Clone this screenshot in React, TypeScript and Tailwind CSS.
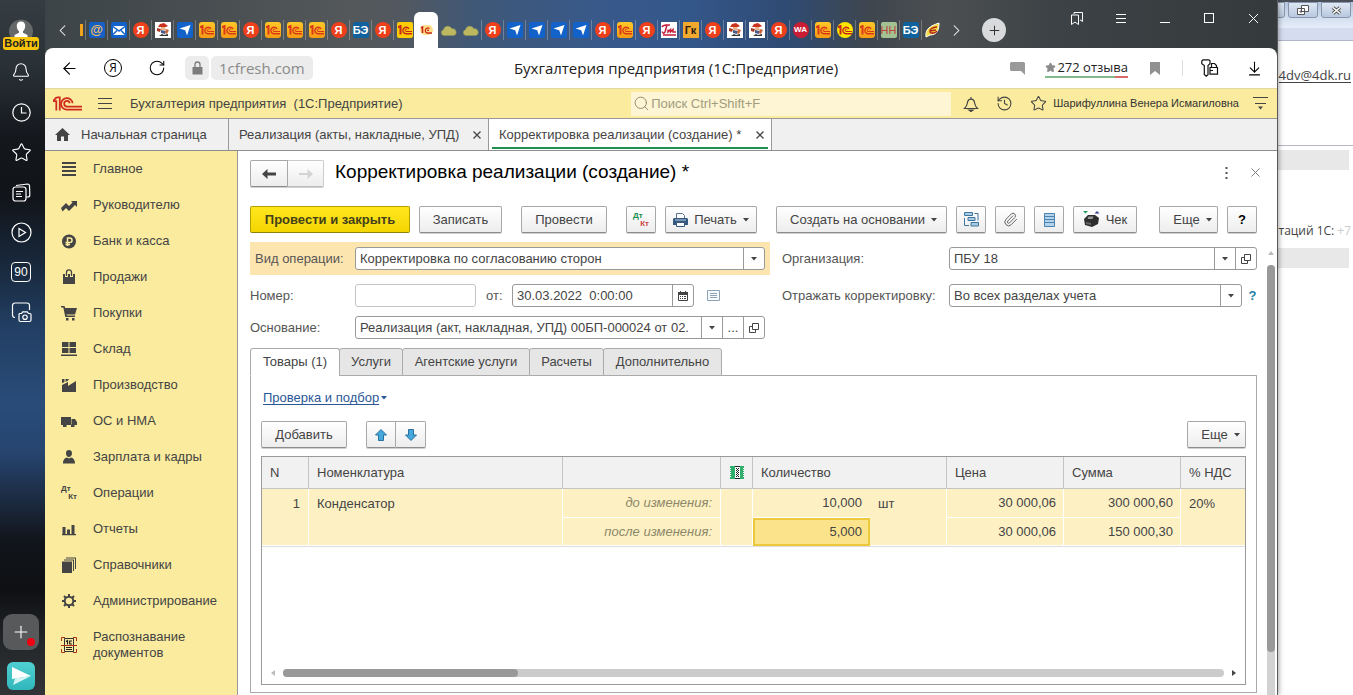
import React from 'react';
import {
  Bell, Star, Search, X, Plus, Paperclip,
  ChevronLeft, ChevronRight, ArrowLeft, RotateCw, ArrowDownToLine, History,
} from 'lucide-react';

const BTN = 'flex h-[27px] shrink-0 items-center justify-center whitespace-nowrap rounded-[2px] border border-[#a8a8a8] border-b-[#8c8c8c] bg-linear-to-b from-white to-[#ededed] text-[13px] text-[#444] shadow-[0_1px_0_#d0d0d0]';
const FIELD = 'flex h-[23px] min-w-0 items-stretch overflow-hidden rounded-[3px] border border-[#999] bg-white text-[13px] text-[#444]';
const CELL_BTN = 'flex w-[21px] shrink-0 items-center justify-center border-l border-[#999] text-[#444]';

/* ---------- мелкие значки ---------- */

const Caret = () => (
  <svg width="6" height="4" viewBox="0 0 6 4" className="shrink-0"><path d="M0 0h6L3 3.5z" fill="currentColor" /></svg>
);

const OpenIcon = () => (
  <svg width="10" height="10" viewBox="0 0 10 10" fill="none" stroke="#444">
    <path d="M3.5.5h6v6h-6zM3.5 3.5h-3v6h6v-3" />
  </svg>
);

// логотип 1С: единица и двойная дуга с хвостом
const Logo1C = ({ className = '', color = '#d02a1e' }: { className?: string; color?: string }) => (
  <svg viewBox="0 0 30 16" className={className} fill="none" stroke={color} strokeWidth="1.8">
    <path d="M0 5.200h3.400V15M2.200 2.300L4.500 1.400H7V15M0 5.200l3.500-3.400" />
    <path d="M20.300 7.500A6 6 0 1 0 14.500 14.200H30" />
    <path d="M17.300 7.500A2.900 2.900 0 1 0 14.500 10.900H30" />
  </svg>
);

// упрощённый вариант для 16-пиксельных вкладок
const Mini1C = ({ color = '#d9381a' }: { color?: string }) => (
  <svg width="14" height="10" viewBox="0 0 14 10" fill="none" stroke={color} strokeWidth="1.400">
    <path d="M0 2.500L2.500 1v8.500" strokeWidth="2" />
    <path d="M11 3.800A3.300 3.300 0 1 0 8 8.800h6" />
    <path d="M9.300 4.600A1.200 1.200 0 1 0 8 6.500h6" strokeWidth="1" />
  </svg>
);

const DtKt = ({ top, bottom }: { top: string; bottom: string }) => (
  <span className="flex w-4 flex-col text-[8px] leading-[8px] font-bold">
    <span className={`text-left ${top}`}>Дт</span>
    <span className={`text-right ${bottom}`}>Кт</span>
  </span>
);

/* ---------- вкладки браузера ---------- */

const Favicon = ({ kind }: { kind: string }) => {
  switch (kind) {
    case 'ya':
      return <span className="flex size-4 items-center justify-center rounded-full bg-[#ee3f1b] text-[11px] leading-4 font-bold text-white">Я</span>;
    case 'tg':
      return (
        <svg width="16" height="16" viewBox="0 0 16 16"><rect width="16" height="16" rx="2" fill="#1262c9" /><path d="M2.500 6.500L13.500 3 10 13.500 8.200 8.200z" fill="#fff" /></svg>
      );
    case '1c':
      return <span className="flex size-4 items-center justify-center rounded-[3px] bg-linear-to-b from-[#ffc928] to-[#f59a12]"><Mini1C /></span>;
    case '1cy':
      return <span className="flex size-4 items-center justify-center rounded-[2px] bg-[#ffcd05]"><Mini1C color="#c8281a" /></span>;
    case '1cr':
      return <span className="flex size-4 items-center justify-center rounded-full bg-[#ffe600]"><Mini1C color="#c8281a" /></span>;
    case 'at':
      return <span className="flex size-4 items-center justify-center rounded-[2px] bg-[#1660c4] text-[13px] leading-4 font-bold text-[#f0bd62]">@</span>;
    case 'mail':
      return (
        <svg width="16" height="16" viewBox="0 0 16 16"><rect width="16" height="16" rx="2" fill="#1262c9" /><rect x="2" y="4" width="12" height="9" fill="#fff" /><path d="M2 4.500l6 4.500 6-4.500M2 12.500l4-4M14 12.500l-4-4" stroke="#1262c9" fill="none" strokeWidth="1.500" /></svg>
      );
    case 'clerk':
      return (
        <svg width="16" height="16" viewBox="0 0 16 16"><path fill="#fff" d="M0 0h16v16H0z" /><path d="M3 5l2-3 4-1 4 3-2 1H6z" fill="#c8321e" /><path d="M6 5h4l1 3H6z" fill="#eab58b" /><path d="M2 6l4 1-1 3-3-1z" fill="#a63a22" /><path d="M6 8l5 1-1 3-4-1z" fill="#4a5c8c" /><path d="M11 7l3 1-2 4-2-1z" fill="#c9653a" /><path d="M4 14l3-2 2 1 4-1v2z" fill="#333" /></svg>
      );
    case 'cloud':
      return (
        <svg width="17" height="11" viewBox="0 0 17 11"><path d="M3.500 10.500a3 3 0 0 1 0-5.800A4.500 4.500 0 0 1 12 3.800a3.400 3.400 0 0 1 1.500 6.700z" fill="#bdb760" stroke="#8b9a58" strokeWidth=".5" /></svg>
      );
    case 'be':
      return <span className="flex size-4 items-center justify-center rounded-[2px] bg-[#10629e] text-[11px] leading-4 font-bold text-white">БЭ</span>;
    case 'hh':
      return <span className="flex size-4 items-center justify-center rounded-[2px] bg-[#a3c293] text-[11px] leading-4 text-[#bd4438]">НН</span>;
    case 'wa':
      return <span className="flex size-4 items-center justify-center rounded-full bg-[#c81d33] text-[8px] leading-4 font-bold text-white">WA</span>;
    case 'gk':
      return <span className="flex size-4 items-center justify-center bg-[#f3a92e] text-[11px] leading-4 font-bold text-[#2a1c14]">Гк</span>;
    case 'trade':
      return (
        <svg width="16" height="16" viewBox="0 0 16 16"><path fill="#fff" d="M0 0h16v16H0z" /><path d="M1 5c1-3 4-2 8-2M6 3L4 10c-1 2-3 1-2.500-.5M7 7.500v2.500l2.500-2.500v2.500L12 7.500v2.500h3M2 13h13" stroke="#c61e38" strokeWidth="1.500" fill="none" /></svg>
      );
    case 'leaf':
      return (
        <svg width="16" height="16" viewBox="0 0 16 16"><path d="M1 15C0 7 5 4 14 1c0 7-2 12-9 12z" fill="#f4dc3c" stroke="#fff" /><path d="M12 5C7 5 4 8 5 10s6 1 7-1M5 9l6-1" stroke="#b3291e" strokeWidth="1.600" fill="none" /></svg>
      );
    default:
      return null;
  }
};

const tabsBefore = ['at', 'mail', 'ya', 'clerk', 'tg', '1c', '1c', 'ya', '1c', '1c', '1c', 'ya', 'be', 'ya', '1cy'];
const tabsAfter = ['cloud', 'cloud', 'ya', 'tg', 'tg', 'tg', 'tg', 'ya', '1c', 'ya', 'trade', 'gk', 'ya', 'clerk', 'clerk', 'ya', 'wa', '1c', '1cr', '1c', 'hh', 'be', 'leaf'];

const BrowserTab = ({ kind, line = true }: { kind: string; line?: boolean }) => (
  <button className={`flex h-5 w-[22px] shrink-0 items-center justify-center border-l ${line ? 'border-white/25' : 'border-transparent'}`}>
    <Favicon kind={kind} />
  </button>
);

const TabStrip = () => (
  <div className="flex h-12 shrink-0">
    <div className="flex min-w-0 items-center pt-3">
      <button className="flex w-[35px] shrink-0 items-center justify-center text-white"><ChevronLeft size={19} strokeWidth={1.3} /></button>
      <span className="mr-[2px] h-3 w-[3px] shrink-0 bg-[#f3a21c]" />
      {tabsBefore.map((k, i) => <BrowserTab key={i} kind={k} />)}
      <span className="-mt-3 flex h-12 shrink-0 self-stretch pt-3">
        <span className="flex h-9 w-[22px] items-center justify-center rounded-t-[6px] bg-white shadow-[-1px_0_0_#fff,1px_0_0_#fff]">
          <span className="flex h-[10px] w-[13px] items-center justify-center rounded-full bg-[#ffdf8a]">
            <svg width="12" height="8" viewBox="0 0 12 8" fill="none" stroke="#c8281a"><path d="M1 2l1.500-1v6" strokeWidth="1.600" /><path d="M9.500 2.500A2.600 2.600 0 1 0 7 7h5M7 4.300h2" strokeWidth="1.300" /></svg>
          </span>
        </span>
      </span>
      {tabsAfter.map((k, i) => <BrowserTab key={i} kind={k} line={i > 1} />)}
      <button className="flex w-[27px] shrink-0 items-center justify-center text-white"><ChevronRight size={19} strokeWidth={1.3} /></button>
      <button className="ml-3 flex size-6 shrink-0 items-center justify-center rounded-full bg-[#d9dadb] text-[#333]"><Plus size={15} strokeWidth={1.6} /></button>
    </div>
    <div className="ml-auto flex h-9 shrink-0 items-center pr-[2px] text-white">
      <button className="flex w-11 justify-center" aria-label="Закладки">
        <svg width="14" height="15" viewBox="0 0 14 15" fill="none" stroke="currentColor"><path d="M4 3V1.500h8.500v9L10 8.800M1.500 4h7v9.500L5 11l-3.500 2.500z" /></svg>
      </button>
      <button className="flex w-11 justify-center" aria-label="Меню">
        <svg width="10" height="9" viewBox="0 0 10 9" stroke="currentColor"><path d="M0 .5h10M0 4.500h10M0 8.500h10" /></svg>
      </button>
      <button className="flex w-11 justify-center pt-2" aria-label="Свернуть"><span className="h-px w-[10px] bg-white" /></button>
      <button className="flex w-11 justify-center" aria-label="Развернуть"><span className="size-[10px] border border-white" /></button>
      <button className="flex w-11 justify-center" aria-label="Закрыть"><X size={17} strokeWidth={1.4} /></button>
    </div>
  </div>
);

const AddressBar = () => (
  <div className="flex h-10 shrink-0 items-center rounded-t-[8px] bg-white pr-[2px] font-['Open_Sans','Noto_Sans',sans-serif] text-black">
    <div className="flex flex-1 items-center">
      <button className="ml-[2px] flex w-11 justify-center"><ArrowLeft size={19} strokeWidth={1.4} /></button>
      <button className="flex w-11 justify-center"><span className="flex size-[18px] items-center justify-center rounded-full border border-black text-[12px] leading-none">Я</span></button>
      <button className="flex w-11 justify-center"><RotateCw size={18} strokeWidth={1.4} /></button>
      <span className="ml-[6px] flex h-6 w-6 items-center justify-center rounded-[5px] bg-[#ececec] text-[#7c7c7c]">
        <svg width="11" height="14" viewBox="0 0 11 14"><path d="M.5 6h10v7.500H.5z" fill="currentColor" /><path d="M3 6V3.500a2.500 2.500 0 0 1 5 0V6" fill="none" stroke="currentColor" strokeWidth="1.300" /></svg>
      </span>
      <span className="ml-[2px] flex h-6 items-center rounded-[5px] bg-[#ececec] px-2 text-[15px] text-[#8a8a8a]">1cfresh.com</span>
    </div>
    <div className="pl-8 text-[15px] whitespace-nowrap text-[#222]">Бухгалтерия предприятия (1С:Предприятие)</div>
    <div className="flex flex-1 items-center justify-end">
      <svg width="15" height="13" viewBox="0 0 15 13" className="mr-5"><path d="M1.500 0h12A1.500 1.500 0 0 1 15 1.500V13l-4-4H1.500A1.500 1.500 0 0 1 0 7.500v-6A1.500 1.500 0 0 1 1.500 0z" fill="#999" /></svg>
      <a href="#" className="text-[13px] leading-[18px] whitespace-nowrap text-[#222]">
        <span className="flex items-center gap-px"><Star size={11} fill="#8a8a8a" stroke="#8a8a8a" />272 отзыва</span>
        <span className="flex h-[2px]"><span className="flex-1 bg-[#84bb8d]" /><span className="w-[13px] bg-[#d96a6a]" /></span>
      </a>
      <button className="flex w-[54px] justify-center text-[#909090]" aria-label="В закладки"><svg width="10" height="13" viewBox="0 0 10 13"><path d="M0 0h10v13L5 9l-5 4z" fill="currentColor" /></svg></button>
      <span className="h-4 w-px bg-[#ddd]" />
      <button className="flex w-[50px] justify-center pl-1" aria-label="Пароли">
        <svg width="18" height="18" viewBox="0 0 18 18" fill="none" stroke="#111" strokeWidth="1.200"><path d="M2 .8h5.500A1.500 1.500 0 0 1 9 2.300v2.400L7 6.500v9.200l-1.800 1.500-1.900-1.700V6.500L.8 4.700V2z" /><path d="M9 8.500h7.500v6.700H9zM10.500 8.300V4.500h3l2 2v1.800M9 11.500h3" /></svg>
      </button>
      <button className="flex w-[42px] justify-center" aria-label="Загрузки"><ArrowDownToLine size={17} strokeWidth={1.500} /></button>
    </div>
  </div>
);

/* ---------- боковая панель браузера ---------- */

const BrowserRail = () => {
  const cell = 'flex h-10 items-center justify-center';
  return (
    <aside className="flex w-[45px] shrink-0 flex-col bg-[linear-gradient(180deg,#353d42_0%,#2a3238_9%,#14171c_20%,#111419_28%,#18283b_38%,#223f63_47%,#294c79_58%,#264570_65%,#1d2e47_71%,#11141a_78%,#0e1013_85%,#25282a_93%,#313336_100%)] pr-[3px] text-white">
      <button className="flex h-[52px] flex-col items-center pt-[18px]">
        <svg width="24" height="19" viewBox="0 0 24 19" className="shrink-0"><path d="M1.300 19a12 12 0 1 1 21.400 0z" fill="#646868" /><path d="M12 3.500c3 0 4.500 2 4.200 5-.3 2.600-1.300 4-2.200 4.800v1.500l4.500 2.200V19h-13v-2l4.500-2.200v-1.500c-1-.8-2-2.200-2.200-4.800-.3-3 1.200-5 4.200-5z" fill="#fff" /></svg>
        <span className="w-9 rounded-[3px] bg-[#f8c50c] text-center text-[11px] leading-[13px] font-bold text-[#222]">Войти</span>
      </button>
      <button className={cell} aria-label="Уведомления"><Bell size={20} strokeWidth={1.3} /></button>
      <button className={cell} aria-label="История">
        <svg width="19" height="19" viewBox="0 0 19 19" fill="none" stroke="currentColor" strokeWidth="1.200"><circle cx="9.500" cy="9.500" r="8.700" /><path d="M9.500 4v6h5" /></svg>
      </button>
      <button className={cell} aria-label="Избранное"><Star size={21} strokeWidth={1.3} /></button>
      <button className={cell} aria-label="Коллекции">
        <svg width="19" height="19" viewBox="0 0 19 19" fill="none" stroke="currentColor" strokeWidth="1.200"><rect x="1" y="4" width="13" height="14" rx="2.500" /><path d="M4 2.500L15.500 1a2 2 0 0 1 2 1.800l.3 9.200a2 2 0 0 1-2 2H14M4 8.500h7M4 11h5M4 13.500h6" /></svg>
      </button>
      <button className={cell} aria-label="Видео">
        <svg width="21" height="21" viewBox="0 0 21 21" fill="none" stroke="currentColor" strokeWidth="1.200"><circle cx="10.500" cy="10.500" r="9.500" /><path d="M8 6.500l6.500 4-6.500 4z" /></svg>
      </button>
      <button className={cell}><span className="flex size-5 items-center justify-center rounded-[4px] border border-white text-[12px]">90</span></button>
      <button className={cell} aria-label="Скриншот">
        <svg width="21" height="21" viewBox="0 0 21 21" fill="none" stroke="currentColor" strokeWidth="1.200"><path d="M4 15.500a2.500 2.500 0 0 1-2.500-2.500V3.500A2.500 2.500 0 0 1 4 1h12a2.500 2.500 0 0 1 2.500 2.500V8" /><path d="M8.500 11.500h2l1.200-1.700h4.600l1.200 1.700h1.500a1 1 0 0 1 1 1V18a1.500 1.500 0 0 1-1.500 1.500h-9A1.500 1.500 0 0 1 8 18v-5.500z" /><circle cx="14" cy="15.200" r="2.200" /></svg>
      </button>
      <div className="mt-auto flex flex-col items-center gap-3 pb-[5px]">
        <button className="relative flex size-9 items-center justify-center rounded-[9px] bg-[#58595a]" aria-label="Добавить">
          <Plus size={20} strokeWidth={1.3} />
          <span className="absolute right-1 bottom-1 size-2 rounded-full bg-[#f00010]" />
        </button>
        <button className="flex size-7 items-center justify-center rounded-[6px] bg-linear-to-b from-[#4fcfd1] to-[#2fb7bb]" aria-label="Мессенджер">
          <svg width="22" height="20" viewBox="0 0 22 20"><path d="M2 1l19 9L2 13z" fill="#fff" /><path d="M21 10L3 19l2-6.500z" fill="#d6f4f4" /></svg>
        </button>
      </div>
    </aside>
  );
};

/* ---------- шапка 1С ---------- */

const AppHeader = () => (
  <header className="flex h-[31px] shrink-0 items-center border-t border-b border-t-[#e2d9a0] border-b-[#999] bg-[#faeb9e] pr-[9px] text-[#444]">
    <Logo1C className="ml-2 w-[29px]" />
    <button className="ml-4" aria-label="Меню"><svg width="14" height="12" viewBox="0 0 14 12" stroke="#444"><path d="M0 .5h14M0 5.500h14M0 10.500h14" /></svg></button>
    <span className="ml-[18px] text-[13px] whitespace-pre">Бухгалтерия предприятия  (1С:Предприятие)</span>
    <label className="ml-auto flex h-6 w-[320px] items-center bg-[#fdf5d3] pl-[2px] text-[#8d8868]">
      <Search size={17} strokeWidth={1.300} />
      <input type="search" aria-label="Поиск" placeholder="Поиск Ctrl+Shift+F" className="min-w-0 flex-1 bg-transparent pl-px text-[13px] outline-none placeholder:text-[#a19c80]" />
    </label>
    <button className="ml-[11px] flex w-[17px] justify-center" aria-label="Оповещения">
      <svg width="16" height="16" viewBox="0 0 16 16" fill="none" stroke="#444" strokeWidth="1.200"><path d="M8 1v1.500M1.500 12.500h13C11.500 10 12 8 11.300 5.500c-.8-3.300-5.800-3.300-6.600 0C4 8 4.500 10 1.500 12.500z" /><path d="M6 14h4l-2 1.500z" fill="#444" /></svg>
    </button>
    <button className="ml-[17px]" aria-label="История"><History size={17} strokeWidth={1.500} /></button>
    <button className="ml-[17px]" aria-label="Избранное"><Star size={17} strokeWidth={1.500} /></button>
    <span className="ml-[6px] text-[11px] whitespace-nowrap text-[#333]">Шарифуллина Венера Исмагиловна</span>
    <button className="ml-[14px]" aria-label="Настройки"><svg width="15" height="13" viewBox="0 0 15 13"><path d="M0 .5h15M2 6.500h11" stroke="#444" /><path d="M5 9.500h5L7.500 12.500z" fill="#444" /></svg></button>
  </header>
);

const CloseTab = () => (
  <svg width="8" height="8" viewBox="0 0 8 8" stroke="#444" strokeWidth="1.300"><path d="M.5.5l7 7M7.500.5l-7 7" /></svg>
);

const AppTabs = () => (
  <nav className="flex h-8 shrink-0 border-b border-[#8e8e8e] bg-[#f0f0f0] text-[13px] text-[#444]">
    <button className="flex w-[184px] items-center gap-[11px] border-r border-[#999] pl-[10px]">
      <svg width="15" height="13" viewBox="0 0 15 13"><path d="M7.500 0L15 7h-2v6H9V8.500H6V13H2V7H0z" fill="#444" /></svg>
      Начальная страница
    </button>
    <div className="flex w-[260px] items-center justify-between border-r border-[#999] pr-[7px] pl-[10px]">
      <button className="whitespace-nowrap">Реализация (акты, накладные, УПД)</button>
      <button aria-label="Закрыть вкладку"><CloseTab /></button>
    </div>
    <div className="flex w-[283px] border-r border-[#999] bg-white px-[3px] pb-px">
      <div className="flex flex-1 items-center justify-between border-b-2 border-[#1f9050] pt-[3px] pr-1 pl-[7px]">
        <button className="whitespace-nowrap">Корректировка реализации (создание) *</button>
        <button aria-label="Закрыть вкладку"><CloseTab /></button>
      </div>
    </div>
  </nav>
);

/* ---------- разделы ---------- */

const sections: { name: string; icon: React.ReactNode }[] = [
  { name: 'Главное', icon: <path d="M1 1h14v2H1zM1 5h14v2H1zM1 9h14v2H1zM1 13h14v2H1z" /> },
  { name: 'Руководителю', icon: <path d="M0 11l5-5 3 3 3.500-3.500L10 4h6v6l-2-2-6 6-3-3-3.500 3.500z" /> },
  { name: 'Банк и касса', icon: <><circle cx="8" cy="8.500" r="7" /><path d="M6.500 13V5h2.300a2 2 0 0 1 0 4.500H4.500M4.500 11.500h4.500" fill="none" stroke="#faeb9e" strokeWidth="1.500" /></> },
  { name: 'Продажи', icon: <><path d="M2 5h12v10H2z" /><path d="M5.500 8V3.500a2.500 2.500 0 0 1 5 0V8" fill="none" stroke="#faeb9e" strokeWidth="3" /><path d="M5.500 7V3.300a2.500 2.500 0 0 1 5 0V7" fill="none" stroke="#444" strokeWidth="1.300" /></> },
  { name: 'Покупки', icon: <path d="M0 1h3.500l.7 2H16l-2 6.500H5.500l.3 1H14v1.500H4.300L2.300 2.500H0zM5 13h2.500v2.500H5zM11 13h2.500v2.500H11z" /> },
  { name: 'Склад', icon: <path d="M1 1h6.500v5H1zM8.500 1H15v5H8.500zM1 7h6.500v5H1zM8.500 7H15v5H8.500zM0 13.500h16V15H0z" /> },
  { name: 'Производство', icon: <path d="M1 15V8l6-3v4l8-5v11zM1 2h2.500v3L1 6.300zM4.500 2H8L6.500 4l-2 .8z" /> },
  { name: 'ОС и НМА', icon: <path d="M0 4h10v8H0zM10.500 6H14l2 3v3h-5.500zM2 11.500h3.500V14H2zM10 11.500h3.500V14H10z" /> },
  { name: 'Зарплата и кадры', icon: <path d="M8 1c2 0 3 1.300 3 3.200S9.800 8 8 8 5 6.200 5 4.200 6 1 8 1zM2 14.500c0-4 2-5.500 4-6l2 1 2-1c2 .5 4 2 4 6z" /> },
  { name: 'Операции', icon: null },
  { name: 'Отчеты', icon: <path d="M1.500 6h3v7.500h-3zM6 8.500h3v5H6zM10.500 4h3v9.500h-3zM1 13h14v1.300H1z" /> },
  { name: 'Справочники', icon: <path d="M1 4.500h10V16H1zM3 2.500h10V14h-1V3.500H3zM5 .5h10V12h-1V1.500H5z" /> },
  { name: 'Администрирование', icon: <><circle cx="8" cy="8" r="4.300" fill="none" stroke="#444" strokeWidth="2" /><path d="M8 1v3M8 12v3M1 8h3M12 8h3M3 3l2.200 2.200M10.800 10.800L13 13M3 13l2.200-2.200M10.800 5.200L13 3" stroke="#444" strokeWidth="2" /></> },
  { name: 'Распознавание документов', icon: <><path d="M3.500 1.500h9v13h-9z" fill="none" stroke="#333" /><path d="M5 4.500l1.500-1V7.500M11 4H8.700v3H11M5 10.500h6M5 12.500h6" fill="none" stroke="#222" strokeWidth="1.200" /><path d="M0 8.500h16M.5 4V.5H4M12 .5h3.500V4M.5 12v3.500H4M12 15.500h3.500V12" fill="none" stroke="#b03018" /></> },
];

const SectionPanel = () => (
  <nav className="w-[193px] shrink-0 border-r border-[#999] bg-[#faeb9e]">
    {sections.map((s) => (
      <a key={s.name} href="#" className="flex min-h-9 items-center pl-4 text-[13px] leading-4 text-[#444] last:pt-[10px]">
        <span className="flex w-4 shrink-0 justify-center">
          {s.icon ? <svg width="16" height="16" viewBox="0 0 16 16" fill="#444">{s.icon}</svg> : <DtKt top="text-[#444]" bottom="text-[#444]" />}
        </span>
        <span className="ml-4 w-[130px]">{s.name}</span>
      </a>
    ))}
  </nav>
);

/* ---------- форма документа ---------- */

const Toolbar = () => (
  <div className="mt-[21px] flex gap-[9px] pr-5 pl-3">
    <button className="flex h-[27px] w-[160px] items-center justify-center rounded-[2px] border border-[#b59f00] border-b-[#93820a] bg-linear-to-b from-[#ffe71c] to-[#f3d500] text-[13px] font-bold whitespace-nowrap text-[#443f1a]">Провести и закрыть</button>
    <button className={`${BTN} w-[83px]`}>Записать</button>
    <button className={`${BTN} ml-[10px] w-[86px]`}>Провести</button>
    <button className={`${BTN} ml-[10px] w-[30px]`}><DtKt top="text-[#159050]" bottom="text-[#d0444a]" /></button>
    <button className={`${BTN} w-[92px] gap-[6px]`}>
      <svg width="15" height="14" viewBox="0 0 15 14"><path d="M3.500 5V.5h6l2 2V5" fill="#fff" stroke="#5a7390" /><path d="M1 5h13l1 1v6H0V6z" fill="#35587f" /><path d="M2 7h11" stroke="#b9cde3" /><path d="M3.500 9.500h8v4h-8z" fill="#fff" stroke="#35587f" /></svg>
      Печать <Caret />
    </button>
    <button className={`${BTN} ml-[10px] w-[171px] gap-[6px] pl-1`}>Создать на основании <Caret /></button>
    <button className={`${BTN} w-[30px]`} aria-label="Структура подчиненности">
      <svg width="15" height="15" viewBox="0 0 15 15" fill="#a9cbe4" stroke="#3d769f"><path d="M.5.5h8v3h-8zM4 5.500h7v3H4zM7 10.500h7.500v3.500H7z" /><path d="M10.500 1.500H14v7M.5 6v7.500H5" fill="none" /></svg>
    </button>
    <button className={`${BTN} w-[30px]`} aria-label="Файлы"><Paperclip size={15} strokeWidth={1.600} className="text-[#666]" /></button>
    <button className={`${BTN} w-[30px]`} aria-label="Реестр">
      <svg width="11" height="14" viewBox="0 0 11 14"><path d="M.5.5h10v13H.5z" fill="#b4d2ea" stroke="#4a82b0" /><path d="M0 3.500h11M0 6.500h11M0 9.500h11" stroke="#4a82b0" /></svg>
    </button>
    <button className={`${BTN} w-[64px] gap-[6px]`}>
      <svg width="17" height="17" viewBox="0 0 17 17"><path d="M1 8l4-4h7l4 3-1 6-6 3-7-2z" fill="#2d2d2d" /><path d="M5.500 5.500h5l-1 2.500h-5z" fill="#9a9a9a" /><path d="M3 11l5 1v2l-5-1z" fill="#666" /><path d="M0 0h5L2.500 2.500z" fill="#1d9a5c" /><path d="M11.500 2.500h5L14 0z" fill="#30408a" /></svg>
      Чек
    </button>
    <button className={`${BTN} ml-auto w-[59px] gap-[6px] pl-2`}>Еще <Caret /></button>
    <button className={`${BTN} w-[30px] font-bold text-black`}>?</button>
  </div>
);

const HeaderFields = () => (
  <div className="flex gap-3 text-[13px] text-[#555]">
    <div className="flex w-[520px] shrink-0 flex-col gap-[9px]">
      <div className="flex items-center bg-[#fde5b0] p-[5px]">
        <label htmlFor="op" className="w-[100px]">Вид операции:</label>
        <div className={`${FIELD} flex-1`}>
          <select id="op" className="flex-1 appearance-none bg-transparent pl-1 outline-none"><option>Корректировка по согласованию сторон</option></select>
          <span className={CELL_BTN}><Caret /></span>
        </div>
      </div>
      <div className="flex items-center">
        <label htmlFor="num" className="w-[105px]">Номер:</label>
        <div className={`${FIELD} w-[121px] border-[#c4c4c4]`}><input id="num" className="w-full px-1 outline-none" /></div>
        <label htmlFor="date" className="w-9 pl-[10px]">от:</label>
        <div className={`${FIELD} w-[182px]`}>
          <input id="date" defaultValue="30.03.2022  0:00:00" className="min-w-0 flex-1 pl-1 outline-none" />
          <button className={CELL_BTN} aria-label="Выбрать дату">
            <svg width="10" height="10" viewBox="0 0 10 10"><path d="M.5 1.500h9v8h-9z" fill="none" stroke="#444" /><path d="M0 1h10v3H0zM2 0h1v2H2zM7 0h1v2H7zM2 5h1v1H2zM4 5h1v1H4zM6 5h2v1H6zM2 7h1v1H2zM4 7h1v1H4zM6 7h2v1H6z" fill="#444" /></svg>
          </button>
        </div>
        <svg width="13" height="11" viewBox="0 0 13 11" className="ml-[13px]"><path d="M.5.5h12v10H.5z" fill="#f7fafc" stroke="#8da3b5" /><path d="M3 3.500h7M3 5.500h7M3 7.500h7" stroke="#8da3b5" /></svg>
      </div>
      <div className="flex items-center pr-[5px]">
        <label htmlFor="base" className="w-[105px]">Основание:</label>
        <div className={`${FIELD} flex-1`}>
          <input id="base" defaultValue="Реализация (акт, накладная, УПД) 00БП-000024 от 02." className="min-w-0 flex-1 pl-1 outline-none" />
          <button className={CELL_BTN} aria-label="Список"><Caret /></button>
          <button className={CELL_BTN}>...</button>
          <button className={CELL_BTN} aria-label="Открыть"><OpenIcon /></button>
        </div>
      </div>
    </div>
    <div className="flex min-w-0 flex-1 flex-col gap-[9px]">
      <div className="flex items-center py-[5px]">
        <label htmlFor="org" className="w-[167px] shrink-0">Организация:</label>
        <div className={`${FIELD} flex-1`}>
          <select id="org" className="min-w-0 flex-1 appearance-none bg-transparent pl-1 outline-none"><option>ПБУ 18</option></select>
          <span className={CELL_BTN}><Caret /></span>
          <button className={CELL_BTN} aria-label="Открыть"><OpenIcon /></button>
        </div>
      </div>
      <div className="flex items-center">
        <label htmlFor="reflect" className="w-[167px] shrink-0">Отражать корректировку:</label>
        <div className={`${FIELD} flex-1`}>
          <select id="reflect" className="min-w-0 flex-1 appearance-none bg-transparent pl-1 outline-none"><option>Во всех разделах учета</option></select>
          <span className={CELL_BTN}><Caret /></span>
        </div>
        <button className="w-[15px] pl-[6px] font-bold text-[#1c7fa6]">?</button>
      </div>
    </div>
  </div>
);

const docTabs = [
  { name: 'Товары (1)', cls: 'w-[90px] bg-white border-b-white' },
  { name: 'Услуги', cls: 'w-[64px] bg-[#e6e6e6]' },
  { name: 'Агентские услуги', cls: 'w-[128px] bg-[#e6e6e6]' },
  { name: 'Расчеты', cls: 'w-[75px] bg-[#e6e6e6]' },
  { name: 'Дополнительно', cls: 'w-[119px] bg-[#e6e6e6]' },
];

const GoodsTable = () => {
  const th = 'border-r border-b border-[#c4c4c4] px-2 text-left font-normal';
  const td = 'border-r border-b border-white px-2';
  return (
    <table className="w-full table-fixed border-separate border-spacing-0 text-[13px] text-[#444]">
      <colgroup>
        <col className="w-[47px]" /><col /><col className="w-[158px]" /><col className="w-[32px]" />
        <col className="w-[117px]" /><col className="w-[77px]" /><col className="w-[117px]" /><col className="w-[117px]" /><col className="w-[64px]" />
      </colgroup>
      <thead>
        <tr className="h-8 bg-[#f1f1f1]">
          <th className={th}>N</th>
          <th className={th}>Номенклатура</th>
          <th className={th} />
          <th className="border-r border-b border-[#c4c4c4]">
            <svg width="14" height="13" viewBox="0 0 14 13" className="mx-auto">
              <path d="M0 0h14v13H0z" fill="#2fae6c" />
              <path d="M0 2.500h1M0 4.500h1M0 6.500h1M0 8.500h1M0 10.500h1M13 2.500h1M13 4.500h1M13 6.500h1M13 8.500h1M13 10.500h1" stroke="#fff" />
              <path d="M5 0h5v13H5z" fill="#fff" />
              <path d="M5 .5h5M5 12.500h5M6 2.500h1M8 2.500h1M7 3.500h1M6 4.500h1M8 4.500h1M7 5.500h1M6 6.500h1M8 6.500h1M7 7.500h1M6 8.500h1M8 8.500h1M7 9.500h1M6 10.500h1M8 10.500h1" stroke="#222" />
            </svg>
          </th>
          <th className={th} colSpan={2}>Количество</th>
          <th className={th}>Цена</th>
          <th className={th}>Сумма</th>
          <th className="border-b border-[#c4c4c4] pl-2 text-left font-normal whitespace-nowrap">% НДС</th>
        </tr>
      </thead>
      <tbody className="bg-[#fdf1c4]">
        <tr className="h-[29px]">
          <td rowSpan={2} className={`${td} pt-[5px] text-right align-top`}>1</td>
          <td rowSpan={2} className={`${td} pt-[5px] align-top`}>Конденсатор</td>
          <td className={`${td} text-right text-[#8d8768] italic`}>до изменения:</td>
          <td rowSpan={2} className={td} />
          <td className={`${td} border-r-transparent pr-[7px] text-right`}>10,000</td>
          <td rowSpan={2} className={`${td} pt-[5px] align-top`}>шт</td>
          <td className={`${td} pr-[7px] text-right`}>30 000,06</td>
          <td className={`${td} pr-[7px] text-right`}>300 000,60</td>
          <td rowSpan={2} className="border-b border-white pt-[5px] pl-2 align-top">20%</td>
        </tr>
        <tr className="h-7">
          <td className={`${td} text-right text-[#8d8768] italic`}>после изменения:</td>
          <td className="border-2 border-[#ecc83a] bg-[#fbe38c] pr-[6px] text-right">5,000</td>
          <td className={`${td} pr-[7px] text-right`}>30 000,06</td>
          <td className={`${td} pr-[7px] text-right`}>150 000,30</td>
        </tr>
      </tbody>
    </table>
  );
};

const DocumentForm = () => (
  <main className="flex min-w-0 flex-1 flex-col bg-white">
    <div className="flex h-[34px] shrink-0 items-end pr-[14px] pl-3">
      <div className="flex h-[25px]">
        <button className={`${BTN} h-[25px] w-[38px] rounded-r-none`} aria-label="Назад">
          <svg width="14" height="10" viewBox="0 0 14 10"><path d="M0 5l5.500-5v3.500H14v3H5.500V10z" fill="#444" /></svg>
        </button>
        <button className={`${BTN} h-[25px] w-9 rounded-l-none border-l-0 border-[#ccc] border-b-[#bbb]`} aria-label="Вперед">
          <svg width="14" height="10" viewBox="0 0 14 10"><path d="M14 5L8.500 0v4H0v2h8.500v4z" fill="#d4d4d4" /></svg>
        </button>
      </div>
      <h1 className="ml-[11px] text-[19px] leading-[26px] whitespace-nowrap text-black">Корректировка реализации (создание) *</h1>
      <button className="ml-auto flex h-[25px] items-center" aria-label="Действия"><svg width="3" height="12" viewBox="0 0 3 12" fill="#555"><path d="M.5 0h2v2h-2zM.5 5h2v2h-2zM.5 10h2v2h-2z" /></svg></button>
      <button className="ml-5 flex h-[25px] items-center text-[#777]" aria-label="Закрыть"><X size={15} strokeWidth={1.500} /></button>
    </div>
    <Toolbar />
    <div className="mt-[9px] flex min-h-0 flex-1">
      <div className="flex min-w-0 flex-1 flex-col pr-[10px] pl-3">
        <HeaderFields />
        <div className="mt-[9px] flex">
          {docTabs.map((t) => (
            <button key={t.name} className={`relative z-10 -mr-px -mb-px h-[28px] rounded-t-[3px] border border-[#aaa] text-[13px] whitespace-nowrap text-[#444] ${t.cls}`}>{t.name}</button>
          ))}
        </div>
        <div className="mb-[2px] flex min-h-0 flex-1 flex-col border border-[#aaa] px-[10px] pt-3 pb-[7px]">
          <a href="#" className="flex h-5 items-center gap-[2px] pl-[2px] text-[13px] text-[#2b5797]"><span className="underline underline-offset-2">Проверка и подбор</span><Caret /></a>
          <div className="mt-[13px] flex">
            <button className={`${BTN} w-[86px]`}>Добавить</button>
            <button className={`${BTN} ml-[19px] w-[30px] rounded-r-none`} aria-label="Вверх">
              <svg width="12" height="12" viewBox="0 0 12 12"><path d="M6 .5L11.500 6H8.500v5.500h-5V6H.5z" fill="#45a8dc" stroke="#2a6f9e" /></svg>
            </button>
            <button className={`${BTN} w-[30px] rounded-l-none border-l-0`} aria-label="Вниз">
              <svg width="12" height="12" viewBox="0 0 12 12"><path d="M6 11.500L11.500 6H8.500V.5h-5V6H.5z" fill="#45a8dc" stroke="#2a6f9e" /></svg>
            </button>
            <button className={`${BTN} ml-auto w-[59px] gap-[6px] pl-2`}>Еще <Caret /></button>
          </div>
          <div className="mt-2 flex min-h-0 flex-1 flex-col border border-[#999]">
            <GoodsTable />
            <div className="border-t border-[#ddd]" />
            <div className="mt-auto flex h-[22px] items-center px-[9px] text-[#444]">
              <svg width="4" height="6" viewBox="0 0 4 6"><path d="M4 0v6L0 3z" fill="#bbb" /></svg>
              <div className="mx-2 h-2 flex-1 rounded-full bg-[#cbcbcb]"><div className="h-2 w-1/4 rounded-full bg-[#999]" /></div>
              <svg width="4" height="6" viewBox="0 0 4 6"><path d="M0 0v6L4 3z" fill="#444" /></svg>
            </div>
          </div>
        </div>
      </div>
      <div className="mr-[2px] flex w-2 shrink-0 flex-col items-center pt-[9px]">
        <svg width="6" height="4" viewBox="0 0 6 4"><path d="M0 4h6L3 0z" fill="#bbb" /></svg>
        <div className="mt-[10px] w-2 flex-1 rounded-t-full bg-[#d2d2d2]"><div className="h-9/10 rounded-full bg-[#999]" /></div>
      </div>
    </div>
  </main>
);

/* ---------- окно позади браузера ---------- */

const BackWindow = () => {
  const sysBtn = 'flex h-4 w-[30px] shrink-0 items-center justify-center rounded-b-[3px] border border-[#8795ad] bg-linear-to-b from-[#dfe8f4] to-[#b8c8de] text-[#555]';
  return (
    <div className="flex w-[76px] shrink-0 flex-col overflow-hidden border-l border-[#777] bg-white font-['Open_Sans','Noto_Sans',sans-serif] text-[#444]">
      <div className="flex h-[28px] justify-end gap-[3px] border-t-2 border-[#4a4f58] bg-linear-to-b from-[#b4c6dd] to-[#e6eefa] pr-[2px]">
        <span className={sysBtn} />
        <button className={sysBtn} aria-label="Восстановить"><svg width="12" height="10" viewBox="0 0 12 10" fill="#fff" stroke="#555"><path d="M4.500.5h7v6h-7zM.5 3.500h7v6h-7zM3 6h2v1H3z" /></svg></button>
        <button className={sysBtn} aria-label="Закрыть окно"><svg width="11" height="9" viewBox="0 0 11 9"><path d="M2 1.500l7 6M9 1.500l-7 6" stroke="#555" strokeWidth="3.500" /><path d="M2 1.500l7 6M9 1.500l-7 6" stroke="#fff" strokeWidth="1.500" /></svg></button>
      </div>
      <div className="h-[13px] border-b border-[#b0b5c8] bg-[#d5dcf0]" />
      <div className="flex h-[105px] justify-end border-b border-[#b5b8c8] pt-[25px] pr-[2px]">
        <a href="#" className="h-[17px] border-b border-[#444] text-[13px] leading-[18px] whitespace-nowrap">4dv@4dk.ru</a>
      </div>
      <div className="mt-1 mr-1 h-5 bg-[#e8e8e8]" />
      <div className="flex h-[78px] items-center justify-end pt-[44px] pr-[2px] text-[12px] whitespace-nowrap">таций 1С:<span className="ml-[3px] text-[#ccc]">+7</span></div>
      <div className="mr-1 h-5 bg-[#e8e8e8]" />
    </div>
  );
};

const App: React.FC = () => (
  <div className="flex h-screen overflow-hidden bg-white font-['Liberation_Sans',Arial,sans-serif]">
    <div className="z-10 flex min-w-0 flex-1 shadow-[2px_0_5px_rgba(0,0,0,0.35)]">
      <BrowserRail />
      <div className="flex min-w-0 flex-1 flex-col bg-[linear-gradient(90deg,#3c4447_0%,#54585a_25%,#525860_29%,#3f5878_35%,#38598a_45%,#34578a_52%,#2f4b74_60%,#3f464e_67%,#4c4f51_73%,#3c4245_82%,#353b3c_100%)]">
        <TabStrip />
        <AddressBar />
        <AppHeader />
        <AppTabs />
        <div className="flex min-h-0 flex-1">
          <SectionPanel />
          <DocumentForm />
        </div>
      </div>
    </div>
    <BackWindow />
  </div>
);

export default App;
